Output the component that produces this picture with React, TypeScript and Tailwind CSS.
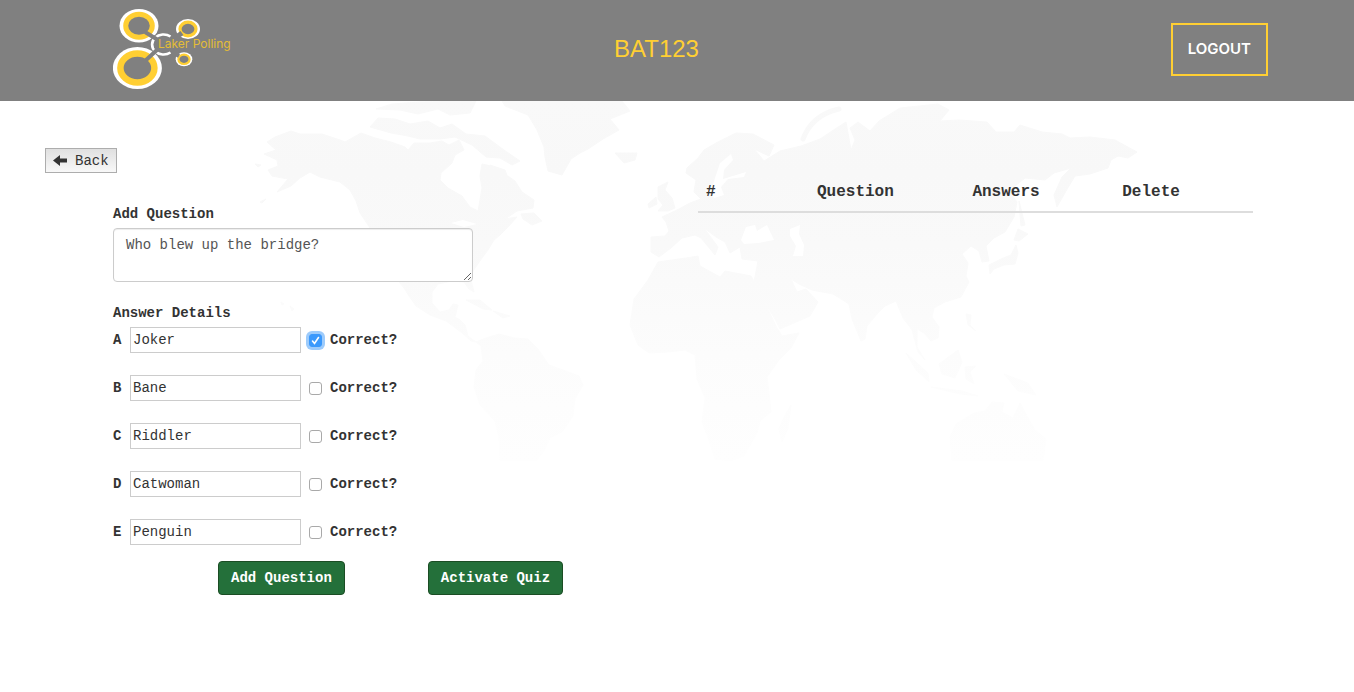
import { useState } from "react";

const LAND = [
  // Alaska, Canada and the United States
  "M267 142 L275 137 L291 131 L300 134 L322 134 L340 140 L345 142 L361 133 L375 138 L391 142 L405 147 L408 150 L414 143 L430 143 L442 141 L449 145 L459 140 L464 150 L455 155 L452 163 L441 173 L440 180 L448 188 L462 196 L470 207 L478 211 L480 200 L482 188 L480 176 L482 164 L491 166 L500 178 L508 176 L515 181 L522 192 L534 200 L533 208 L517 211 L505 219 L517 217 L508 227 L500 235 L494 240 L488 250 L482 258 L473 271 L471 280 L474 292 L469 289 L464 282 L452 281 L438 284 L432 292 L432 303 L440 312 L449 310 L453 304 L458 305 L455 317 L460 320 L465 325 L468 336 L476 342 L471 341 L461 332 L446 321 L430 315 L416 306 L409 296 L404 288 L400 283 L395 275 L388 260 L380 245 L370 228 L360 213 L356 201 L350 190 L340 182 L320 177 L310 172 L300 178 L291 186 L277 192 L288 179 L272 176 L268 170 L278 166 L277 160 L264 154 L276 150 Z",
  // Arctic islands
  "M370 127 L378 118 L395 119 L410 124 L428 121 L440 128 L452 124 L466 134 L485 136 L504 150 L520 161 L512 165 L500 158 L486 157 L472 145 L455 137 L440 139 L420 139 L408 136 L391 133 Z M376 109 L392 104 L420 102 L476 101 L470 113 L450 115 L438 109 L418 114 L400 110 Z",
  "M490 165 L505 170 L508 178 L499 182 Z M521 214 L534 213 L542 221 L532 225 L523 219 Z",
  // Greenland and Iceland
  "M502 101 L622 101 L630 111 L610 119 L619 130 L603 139 L588 149 L580 153 L571 159 L562 175 L548 171 L545 157 L544 147 L537 130 L528 115 L505 106 Z M615 153 L624 153 L637 153 L635 160 L624 163 Z",
  // Hawaii and the Aleutians
  "M281 302 L284 304 L282 305 Z M290 306 L294 309 L292 311 Z M255 164 L261 165 L258 167 Z M260 202 L266 199 L262 203 Z",
  // Caribbean
  "M466 300 L480 300 L492 310 L483 309 Z M493 311 L510 316 L503 318 Z",
  // South America
  "M476 342 L486 338 L499 334 L514 338 L528 339 L538 349 L549 365 L563 370 L579 376 L583 385 L575 399 L573 416 L562 432 L550 438 L544 451 L536 461 L500 461 L499 437 L495 421 L480 405 L474 387 L476 370 L483 361 L481 346 Z",
  // Great Britain and Ireland
  "M658 187 L668 182 L665 190 L672 198 L675 208 L668 211 L658 211 L663 205 L658 199 Z M648 204 L656 197 L657 204 L649 208 Z",
  // Eurasia
  "M651 237 L665 236 L669 231 L666 222 L662 217 L677 210 L690 203 L701 199 L694 192 L696 180 L686 173 L687 168 L698 158 L704 150 L716 143 L736 133 L753 134 L774 145 L769 156 L754 149 L764 161 L780 151 L801 146 L820 139 L835 129 L846 122 L851 150 L855 140 L850 128 L858 122 L870 131 L879 121 L900 108 L938 104 L949 110 L940 121 L959 120 L987 122 L996 132 L1014 132 L1020 125 L1042 132 L1062 134 L1070 138 L1090 137 L1115 140 L1137 152 L1128 158 L1118 156 L1111 160 L1108 168 L1090 174 L1075 176 L1066 191 L1057 207 L1054 195 L1062 177 L1071 168 L1054 173 L1045 180 L1025 178 L1009 191 L1017 202 L1014 217 L1005 232 L994 238 L986 246 L989 261 L982 262 L979 251 L971 246 L962 254 L968 263 L966 276 L969 282 L961 297 L945 302 L934 308 L932 317 L939 327 L938 338 L931 341 L924 333 L917 329 L917 347 L925 360 L918 352 L912 330 L903 318 L896 301 L885 306 L878 313 L867 326 L865 339 L861 341 L852 319 L849 304 L833 294 L812 290 L799 284 L791 279 L797 292 L806 289 L818 302 L810 316 L780 329 L775 319 L765 303 L754 282 L758 261 L742 259 L740 247 L730 253 L725 242 L716 237 L704 228 L718 247 L715 255 L701 238 L695 235 L682 238 L671 248 L659 257 L651 252 Z",
  // Africa
  "M658 262 L686 258 L698 256 L700 266 L720 277 L725 271 L751 276 L758 288 L766 305 L776 326 L782 336 L799 333 L791 348 L779 360 L767 377 L769 393 L771 412 L760 421 L757 433 L744 456 L730 461 L715 459 L707 435 L702 422 L705 398 L697 379 L695 355 L685 350 L668 352 L649 353 L638 345 L630 325 L634 299 L648 280 Z M791 405 L788 428 L782 442 L779 429 L785 415 Z",
  // Japan and Sakhalin
  "M1019 201 L1025 225 L1021 226 Z M1014 240 L1018 229 L1028 234 L1019 241 Z M1016 245 L1018 253 L1015 264 L1004 265 L994 269 L990 274 L989 265 L1001 259 L1011 255 Z",
  // South-east Asia and Australia
  "M906 353 L928 373 L929 382 L916 370 Z M939 364 L958 350 L962 362 L955 378 L942 374 Z M931 387 L962 391 L978 396 L960 394 Z M965 367 L976 366 L970 372 L974 384 L966 379 Z M966 314 L971 315 L970 325 L976 331 L968 325 Z M1004 374 L1028 383 L1036 395 L1018 391 Z",
  "M950 437 L956 424 L974 413 L985 411 L992 402 L1004 403 L1002 412 L1013 418 L1020 403 L1027 416 L1035 430 L1046 439 L1043 461 L952 461 Z",
];

const SEAS = [
  "M741 240 L746 227 L755 225 L757 231 L767 225 L774 240 L758 243 L744 244 Z",
  "M790 229 L800 225 L799 234 L804 245 L803 256 L793 256 L796 246 L790 236 Z",
  "M715 178 L720 163 L731 154 L733 160 L724 170 L723 179 L746 172 L744 177 L728 179 L721 187 L724 195 L714 198 L705 190 L712 188 Z",
  "M451 223 L463 220 L477 224 L464 227 Z",
];

function WorldMap() {
  return (
    <svg
      aria-hidden="true"
      className="pointer-events-none absolute top-0 left-1/2 -z-10 w-[920px] -translate-x-1/2"
      viewBox="217 101 920 360"
    >
      <defs>
        <linearGradient id="land" gradientUnits="userSpaceOnUse" x1="0" y1="101" x2="0" y2="461">
          <stop offset="0" stopColor="#f9f9f9" />
          <stop offset="0.2" stopColor="#f8f8f8" />
          <stop offset="0.4" stopColor="#f9f9f9" />
          <stop offset="0.7" stopColor="#fcfcfc" />
          <stop offset="1" stopColor="#fefefe" />
        </linearGradient>
      </defs>
      {LAND.map((d) => (
        <path key={d} d={d} fill="url(#land)" stroke="url(#land)" strokeWidth="1" strokeLinejoin="round" />
      ))}
      {SEAS.map((d) => (
        <path key={d} d={d} fill="#fff" />
      ))}
      <path d="M803 139 Q812 115 839 109" fill="none" stroke="url(#land)" strokeWidth="5" strokeLinecap="round" />
    </svg>
  );
}

function Logo() {
  return (
    <svg role="img" aria-label="Laker Polling" className="h-[82px] w-[122px]" viewBox="113 7 122 82">
      <ellipse cx="139" cy="24.700" rx="19.500" ry="16.800" fill="#fff" />
      <ellipse cx="139" cy="24.700" rx="13.300" ry="11.500" fill="#808080" stroke="#ffcf33" strokeWidth="5" />
      <ellipse cx="137.400" cy="67" rx="24.500" ry="21" fill="#fff" />
      <ellipse cx="137.400" cy="67" rx="17" ry="14.500" fill="#808080" stroke="#ffcf33" strokeWidth="6.500" />
      <ellipse cx="188" cy="28" rx="12" ry="10" fill="#fff" />
      <ellipse cx="188" cy="28" rx="8" ry="6.800" fill="#808080" stroke="#ffcf33" strokeWidth="3.200" />
      <ellipse cx="184" cy="58.300" rx="8.300" ry="7" fill="#fff" />
      <ellipse cx="184" cy="58.300" rx="5.600" ry="4.700" fill="#808080" stroke="#ffcf33" strokeWidth="2.200" />
      <ellipse cx="163" cy="43" rx="13" ry="11.500" fill="#808080" />
      <path d="M170.500 35.500 A11.500 10 0 1 0 170.500 51.500" fill="none" stroke="#fff" strokeWidth="2.600" />
      <g stroke="#808080" strokeWidth="4" fill="none">
        <path d="M145 31 L158 39" />
        <path d="M145 60 L158 48" />
        <path d="M182 32 L172 39" strokeWidth="5" />
        <path d="M179 55 L172 51" />
      </g>
      <text x="158" y="47" fontSize="12" fontFamily="Inter, sans-serif" fill="#e4bd36">
        Laker Polling
      </text>
    </svg>
  );
}

interface Answer {
  letter: string;
  text: string;
  correct: boolean;
}

const initialAnswers: Answer[] = [
  { letter: "A", text: "Joker", correct: true },
  { letter: "B", text: "Bane", correct: false },
  { letter: "C", text: "Riddler", correct: false },
  { letter: "D", text: "Catwoman", correct: false },
  { letter: "E", text: "Penguin", correct: false },
];

function AnswerRow({ answer, onChange }: { answer: Answer; onChange: (next: Answer) => void }) {
  const { letter, text, correct } = answer;
  return (
    <div className="flex h-[26px] items-center gap-2">
      <label className="flex items-center gap-2 font-bold">
        <span className="w-[9px]">{letter}</span>
        <input
          type="text"
          value={text}
          onChange={(e) => onChange({ ...answer, text: e.target.value })}
          className="h-[26px] w-[171px] border border-[#ccc] bg-white px-0.5 font-normal outline-none"
        />
      </label>
      <label className="flex items-center gap-2 font-bold">
        <span className="grid size-[13px] place-items-center">
          <input
            type="checkbox"
            checked={correct}
            autoFocus={correct}
            onChange={(e) => onChange({ ...answer, correct: e.target.checked })}
            className="col-start-1 row-start-1 size-[13px] appearance-none rounded-[3px] border border-[#a9a9a9] bg-white outline-none checked:border-[#3b99fc] checked:bg-[#3b99fc] focus:ring-3 focus:ring-[#9dcbfb]"
          />
          {correct && (
            <svg aria-hidden="true" viewBox="0 0 13 13" className="pointer-events-none col-start-1 row-start-1 size-[13px]">
              <path d="M3.500 7 L5.500 9.500 L9.500 3.500" fill="none" stroke="#fff" strokeWidth="1.600" strokeLinecap="round" />
            </svg>
          )}
        </span>
        Correct?
      </label>
    </div>
  );
}

export default function App() {
  const [question, setQuestion] = useState("Who blew up the bridge?");
  const [answers, setAnswers] = useState(initialAnswers);

  const update = (next: Answer) => setAnswers((all) => all.map((a) => (a.letter === next.letter ? next : a)));

  const action =
    "h-[34px] rounded border border-[#1b4d24] bg-[#24703a] px-3 font-bold text-white hover:bg-[#1e5e31]";

  return (
    <div className="min-h-screen bg-white font-['Liberation_Mono',monospace] text-sm/5 text-[#333]">
      <header className="grid h-[101px] grid-cols-[1fr_auto_1fr] items-center bg-[#808080] pr-[86px] pb-[3px] pl-[45px] font-['Liberation_Sans',sans-serif]">
        <div className="pl-[68px]">
          <Logo />
        </div>
        <h1 className="text-2xl font-normal text-[#ffcf33]">BAT123</h1>
        <button
          type="button"
          className="h-[53px] justify-self-end border-2 border-[#ffcf33] px-[15px] font-['Inter',sans-serif] text-[15px] font-semibold text-white"
        >
          LOGOUT
        </button>
      </header>

      <main className="relative isolate pt-[47px]">
        <WorldMap />
        <button
          type="button"
          className="ml-[45px] flex h-[25px] items-center gap-2 border border-[#adadad] bg-linear-to-b from-[#e0e0e0] to-[#f8f8f8] px-[7px]"
        >
          <svg aria-hidden="true" viewBox="0 0 14 12" className="h-3 w-3.5">
            <path d="M0 5.500 L7 0 V3.500 H14 V7.500 H7 V11 Z" fill="#333" />
          </svg>
          Back
        </button>

        <div className="grid grid-cols-[39fr_37fr] items-start pr-[101px] pl-[113px]">
          <form className="pt-[31px]" onSubmit={(e) => e.preventDefault()}>
            <label htmlFor="question" className="block font-bold">
              Add Question
            </label>
            <textarea
              id="question"
              value={question}
              onChange={(e) => setQuestion(e.target.value)}
              className="mt-1 block h-[54px] w-[360px] rounded border border-[#ccc] bg-white px-3 py-1.5 text-[#555] shadow-[inset_0_1px_1px_rgba(0,0,0,0.075)] outline-none"
            />
            <fieldset className="mt-[21px]">
              <legend className="font-bold">Answer Details</legend>
              <div className="mt-1 flex flex-col gap-[22px]">
                {answers.map((a) => (
                  <AnswerRow key={a.letter} answer={a} onChange={update} />
                ))}
              </div>
            </fieldset>
            <div className="mt-4 flex gap-[83px] pl-[105px]">
              <button type="submit" className={action}>
                Add Question
              </button>
              <button type="button" className={action}>
                Activate Quiz
              </button>
            </div>
          </form>

          <table className="w-full table-fixed text-left text-base/[22px]">
            <thead>
              <tr className="border-b-2 border-[#ddd]">
                <th className="w-[20%] p-2">#</th>
                <th className="w-[28%] p-2">Question</th>
                <th className="w-[27%] p-2">Answers</th>
                <th className="w-[25%] p-2">Delete</th>
              </tr>
            </thead>
          </table>
        </div>
      </main>
    </div>
  );
}
